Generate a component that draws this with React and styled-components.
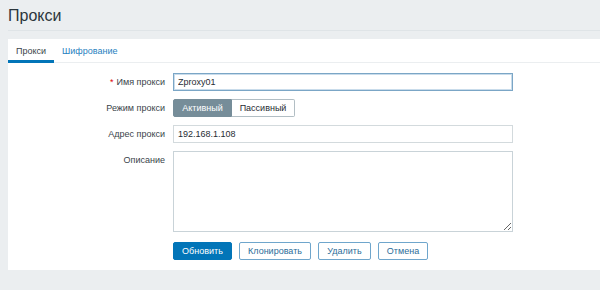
import React from "react";
import styled, { createGlobalStyle } from "styled-components";

const Global = createGlobalStyle`
  html, body { margin: 0; padding: 0; }
  body {
    background: #ebeef0;
    font-family: "Liberation Sans", Arial, sans-serif;
    color: #1f2c33;
    width: 600px;
    height: 290px;
    overflow: hidden;
  }
`;

const Header = styled.header`
  height: 31px;
  margin-left: 8px;
  border-bottom: 1px solid #dfe4e7;
  box-sizing: border-box;
  display: flex;
  align-items: center;
`;

const Title = styled.h1`
  margin: 0;
  font-size: 16px;
  font-weight: normal;
  color: #2b363c;
  line-height: 16px;
  padding-top: 1px;
`;

const Panel = styled.section`
  margin: 8px 0 0 8px;
  background: #fff;
  height: 231px;
  box-sizing: border-box;
  display: flex;
  flex-direction: column;
`;

const TabBar = styled.nav`
  display: flex;
  height: 24px;
  border-bottom: 1px solid #ebeef0;
  box-sizing: border-box;
`;

const Tab = styled.div`
  padding: 0 8px;
  display: flex;
  align-items: center;
  font-size: 9px;
  color: ${(p) => (p.$active ? "#3a444a" : "#1f7fc0")};
  border-bottom: 3px solid ${(p) => (p.$active ? "#0275b8" : "transparent")};
  margin-bottom: -1px;
  padding-top: 3px;
`;

const Form = styled.div`
  display: grid;
  grid-template-columns: 157px 340px;
  column-gap: 8px;
  row-gap: 8px;
  padding-top: 10px;
  align-items: start;
`;

const Label = styled.label`
  font-size: 9px;
  text-align: right;
  line-height: 18px;
  color: #3a444a;
`;

const Req = styled.span`
  color: #dc0000;
  margin-right: 3px;
`;

const Input = styled.input`
  box-sizing: border-box;
  width: 340px;
  height: 18px;
  margin: 0;
  padding: 0 4px;
  font-family: inherit;
  font-size: 9px;
  color: #1f2c33;
  border: 1px solid ${(p) => (p.$focus ? "#7ba6c6" : "#d3dadd")};
  box-shadow: ${(p) => (p.$focus ? "0 0 0 1px #c9dceb inset" : "none")};
  outline: none;
  background: #fff;
`;

const Segmented = styled.div`
  display: flex;
  height: 18px;
`;

const SegButton = styled.button`
  box-sizing: border-box;
  height: 18px;
  width: ${(p) => p.$w}px;
  margin: 0;
  padding: 0;
  font-family: inherit;
  font-size: 9px;
  border: 1px solid ${(p) => (p.$active ? "#768d99" : "#b2bec4")};
  background: ${(p) => (p.$active ? "#768d99" : "#fff")};
  color: ${(p) => (p.$active ? "#fff" : "#1f2c33")};
  border-radius: ${(p) => (p.$first ? "2px 0 0 2px" : "0 2px 2px 0")};
  ${(p) => (p.$first ? "" : "border-left: none;")}
`;

const TextArea = styled.textarea`
  box-sizing: border-box;
  width: 340px;
  height: 81px;
  margin: 0;
  padding: 4px;
  font-family: inherit;
  font-size: 9px;
  border: 1px solid #c9d3d8;
  outline: none;
  display: block;
`;

const Buttons = styled.div`
  display: flex;
  gap: 7px;
  margin-top: 2px;
`;

const Btn = styled.button`
  box-sizing: border-box;
  height: 18px;
  width: ${(p) => p.$w}px;
  margin: 0;
  padding: 0;
  font-family: inherit;
  font-size: 9px;
  border-radius: 2px;
  border: 1px solid;
  background: ${(p) => (p.$primary ? "#0275b8" : "#fff")};
  color: ${(p) => (p.$primary ? "#fff" : "#2c6d99")};
  border-color: ${(p) => (p.$primary ? "#0275b8" : "#6fa6cc")};
`;

export default function App() {
  return (
    <>
      <Global />
      <Header>
        <Title>Прокси</Title>
      </Header>
      <Panel>
        <TabBar>
          <Tab $active>Прокси</Tab>
          <Tab>Шифрование</Tab>
        </TabBar>
        <Form>
          <Label>
            <Req>*</Req>Имя прокси
          </Label>
          <Input $focus defaultValue="Zproxy01" />
          <Label>Режим прокси</Label>
          <Segmented>
            <SegButton $active $first $w={59}>Активный</SegButton>
            <SegButton $w={63}>Пассивный</SegButton>
          </Segmented>
          <Label>Адрес прокси</Label>
          <Input defaultValue="192.168.1.108" />
          <Label>Описание</Label>
          <TextArea />
          <div />
          <Buttons>
            <Btn $primary $w={59}>Обновить</Btn>
            <Btn $w={72}>Клонировать</Btn>
            <Btn $w={53}>Удалить</Btn>
            <Btn $w={50}>Отмена</Btn>
          </Buttons>
        </Form>
      </Panel>
    </>
  );
}
